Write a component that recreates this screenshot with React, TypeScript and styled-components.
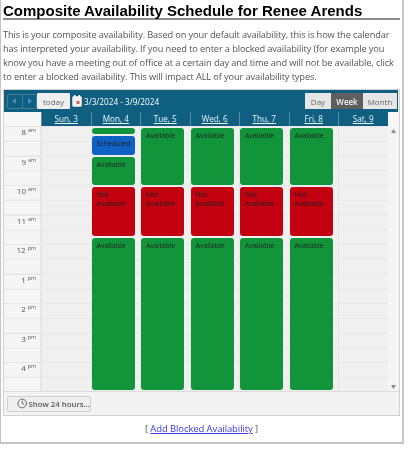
import { FC } from 'react';
import styled, { createGlobalStyle } from 'styled-components';
import { LuClock } from 'react-icons/lu';

const GlobalStyle = createGlobalStyle`
  html, body {
    margin: 0;
    padding: 0;
    background: #fff;
  }
`;

const Page = styled.div`
  width: 404px;
  height: 444px;
  box-sizing: border-box;
  padding: 3px 0 0 2px;
  background: #fff;
  border-left: 1px solid #c4c4c4;
  border-right: 2px solid #c8c8c8;
  border-bottom: 2px solid #c4c4c4;
  overflow: hidden;
  filter: blur(0.3px);
`;

const Title = styled.h1`
  margin: 0 0 8px;
  width: 397px;
  height: 15px;
  font: bold 15px/16px 'Liberation Sans', Arial, sans-serif;
  color: #000;
  white-space: nowrap;
  border-bottom: 2px solid #8c8c8c;
`;

const Intro = styled.p`
  margin: 0 0 5px;
  width: 394px;
  height: 56px;
  font: 9.25px/14px 'Open Sans', sans-serif;
  letter-spacing: -0.12px;
  color: #555;
`;

const Calendar = styled.div`
  width: 395px;
  border: 1px solid #d2d2d2;
  background: #f3f3f3;
`;

const Toolbar = styled.div`
  height: 22px;
  width: 394px;
  box-sizing: border-box;
  padding: 0 1px 0 3px;
  display: flex;
  align-items: center;
  background: #0e5f80;
  color: #fff;
  font: 9px 'Open Sans', sans-serif;
`;

const NavGroup = styled.div`
  display: flex;
  width: 30px;
  height: 15px;
  box-sizing: border-box;
  border: 1px solid #3f7d98;
  border-radius: 2px;
`;

const NavButton = styled.button<{ $first?: boolean }>`
  flex: 1;
  padding: 0;
  border: 0;
  border-left: ${(p) => (p.$first ? '0' : '1px solid #3f7d98')};
  background: transparent;
  display: flex;
  align-items: center;
  justify-content: center;
`;

const TodayButton = styled.button`
  width: 33px;
  height: 16px;
  padding: 0;
  border: 0;
  border-radius: 1px;
  background: #efefef;
  color: #666;
  font: 8px 'Open Sans', sans-serif;
`;

const DateRange = styled.span`
  margin-left: 2px;
  display: flex;
  align-items: center;
  gap: 2px;
  flex: 1;
  font-size: 8.2px;
  white-space: nowrap;
`;

const ViewGroup = styled.div`
  display: flex;
  height: 16px;
`;

const ViewButton = styled.button<{ $w: number; $active?: boolean }>`
  width: ${(p) => p.$w}px;
  padding: 0;
  border: 0;
  background: ${(p) => (p.$active ? '#5e5e5e' : '#e6e6e6')};
  color: ${(p) => (p.$active ? '#f4f4f4' : '#666')};
  font: ${(p) => (p.$active ? '600 ' : '')}8px 'Open Sans', sans-serif;
  white-space: nowrap;
`;

const HeaderRow = styled.div`
  display: grid;
  grid-template-columns: 37px repeat(7, 49.5px) 1fr;
  height: 14px;
  background: #f7f7f7;
`;

const HeaderCell = styled.div`
  background: #0e5f80;
  border-left: 1px solid #5b8ca3;
  color: #e8f3f8;
  font: 8.2px/14px 'Open Sans', sans-serif;
  text-align: center;
  text-decoration: underline;
  white-space: pre;
`;

const Corner = styled.div`
  background: #f7f7f7;
`;

const Body = styled.div`
  display: grid;
  grid-template-columns: 37px repeat(7, 49.5px) 1fr;
  height: 265px;
  overflow: hidden;
  border-bottom: 1px solid #dcdcdc;
`;

const TimeColumn = styled.div`
  display: flex;
  flex-direction: column;
  background: #f5f5f5;
  border-right: 1px solid #e8e8e8;
`;

const HourLabel = styled.div`
  flex: none;
  height: 29.5px;
  box-sizing: border-box;
  padding: 0 4px 0 0;
  text-align: right;
  font: 8px/12px 'Open Sans', sans-serif;
  color: #555;
  background: linear-gradient(#e6e6e6 1px, transparent 1px) 0 0 / 100% 14.75px;
  sup {
    font-size: 5.4px;
    line-height: 0;
    margin-left: 2px;
    vertical-align: 3px;
  }
`;

const DayColumn = styled.div`
  display: flex;
  flex-direction: column;
  gap: 2px;
  box-sizing: border-box;
  padding: 2px 0 0 0;
  background: linear-gradient(#e8e8e8 1px, transparent 1px) 0 0 / 100% 14.75px, #f0f0f0;
  border-left: 1px solid #e6e6e6;
`;

const EventBlock = styled.div<{ $kind: 'open' | 'busy' | 'booked'; $h: number }>`
  flex: none;
  height: ${(p) => p.$h}px;
  box-sizing: border-box;
  width: 43px;
  padding: 3px 0 0 5px;
  border-radius: 3px;
  background: ${(p) =>
    p.$kind === 'open' ? '#12953a' : p.$kind === 'busy' ? '#c3000f' : '#0f62c4'};
  color: #222;
  font: 7px/9.5px 'Open Sans', sans-serif;
  overflow: hidden;
`;

const ScrollTrack = styled.div`
  background: #f4f4f4;
  display: flex;
  flex-direction: column;
  justify-content: space-between;
  align-items: center;
  padding: 3px 0;
  color: #8a8a8a;
`;

const ScrollArrow = styled.svg`
  width: 5px;
  height: 4px;
  fill: #8a8a8a;
`;

const Footer = styled.div`
  height: 23px;
  display: flex;
  align-items: center;
  padding-left: 3px;
  background: #f3f3f3;
`;

const ShowButton = styled.button`
  width: 84px;
  height: 16px;
  box-sizing: border-box;
  padding: 0 0 0 9px;
  border: 1px solid #d0d0d0;
  border-radius: 2px;
  background: #efefef;
  color: #555;
  display: flex;
  align-items: center;
  gap: 1px;
  font: 600 7.8px 'Open Sans', sans-serif;
  white-space: nowrap;
`;

const LinkRow = styled.div`
  margin-top: 6px;
  text-align: center;
  font: 9.5px/14px 'Open Sans', sans-serif;
  letter-spacing: -0.1px;
  color: #555;
  width: 397px;
  a {
    color: #3a3ae0;
    text-decoration: underline;
  }
`;

const Triangle: FC<{ dir: 'left' | 'right' }> = ({ dir }) => (
  <svg width="7" height="8" viewBox="0 0 7 8">
    <path d={dir === 'left' ? 'M5 1 L1 4 L5 7 Z' : 'M2 1 L6 4 L2 7 Z'} fill="#4a86c8" />
  </svg>
);

const CalendarIcon: FC = () => (
  <svg width="10" height="12" viewBox="0 0 10 12">
    <rect x="0.5" y="1.5" width="9" height="10" rx="1" fill="#f2f2f2" stroke="#cfcfcf" />
    <rect x="2" y="0" width="1.5" height="3" fill="#fff" />
    <rect x="6.5" y="0" width="1.5" height="3" fill="#fff" />
    <rect x="4.5" y="6" width="3" height="3" fill="#c9685a" />
  </svg>
);

type DayEvent = { kind: 'open' | 'busy' | 'booked'; h: number; label?: string };

const standardDay: DayEvent[] = [
  { kind: 'open', h: 56.5, label: 'Available' },
  { kind: 'busy', h: 49.5, label: 'Not Available' },
  { kind: 'open', h: 152, label: 'Available' },
];

const mondayEvents: DayEvent[] = [
  { kind: 'open', h: 5.5 },
  { kind: 'booked', h: 19.5, label: 'Scheduled' },
  { kind: 'open', h: 27.5, label: 'Available' },
  { kind: 'busy', h: 49.5, label: 'Not Available' },
  { kind: 'open', h: 152, label: 'Available' },
];

const days: { name: string; events: DayEvent[] }[] = [
  { name: 'Sun, 3', events: [] },
  { name: 'Mon, 4', events: mondayEvents },
  { name: 'Tue, 5', events: standardDay },
  { name: 'Wed, 6', events: standardDay },
  { name: 'Thu, 7', events: standardDay },
  { name: 'Fri, 8', events: standardDay },
  { name: 'Sat, 9', events: [] },
];

const hours: [string, string][] = [
  ['8', 'am'],
  ['9', 'am'],
  ['10', 'am'],
  ['11', 'am'],
  ['12', 'pm'],
  ['1', 'pm'],
  ['2', 'pm'],
  ['3', 'pm'],
  ['4', 'pm'],
];

const App: FC = () => {
  return (
    <Page>
      <GlobalStyle />
      <Title>Composite Availability Schedule for Renee Arends</Title>
      <Intro>
        This is your composite availability. Based on your default availability, this is how the
        calendar has interpreted your availability. If you need to enter a blocked availability (for
        example you know you have a meeting out of office at a certain day and time and will not be
        available, click to enter a blocked availability. This will impact ALL of your availability
        types.
      </Intro>
      <Calendar>
        <Toolbar>
          <NavGroup>
            <NavButton $first>
              <Triangle dir="left" />
            </NavButton>
            <NavButton>
              <Triangle dir="right" />
            </NavButton>
          </NavGroup>
          <TodayButton>today</TodayButton>
          <DateRange>
            <CalendarIcon />
            3/3/2024 - 3/9/2024
          </DateRange>
          <ViewGroup>
            <ViewButton $w={26}>Day</ViewButton>
            <ViewButton $w={32} $active>
              Week
            </ViewButton>
            <ViewButton $w={34}>Month</ViewButton>
          </ViewGroup>
        </Toolbar>
        <HeaderRow>
          <Corner />
          {days.map((d) => (
            <HeaderCell key={d.name}>{d.name}</HeaderCell>
          ))}
          <Corner />
        </HeaderRow>
        <Body>
          <TimeColumn>
            {hours.map(([h, m]) => (
              <HourLabel key={h}>
                {h}
                <sup>{m}</sup>
              </HourLabel>
            ))}
          </TimeColumn>
          {days.map((d) => (
            <DayColumn key={d.name}>
              {d.events.map((e, i) => (
                <EventBlock key={i} $kind={e.kind} $h={e.h}>
                  {e.label}
                </EventBlock>
              ))}
            </DayColumn>
          ))}
          <ScrollTrack>
            <ScrollArrow viewBox="0 0 5 4">
              <path d="M2.5 0 L5 4 L0 4 Z" />
            </ScrollArrow>
            <ScrollArrow viewBox="0 0 5 4">
              <path d="M0 0 L5 0 L2.5 4 Z" />
            </ScrollArrow>
          </ScrollTrack>
        </Body>
        <Footer>
          <ShowButton>
            <LuClock size={11} />
            Show 24 hours...
          </ShowButton>
        </Footer>
      </Calendar>
      <LinkRow>
        [ <a href="#add">Add Blocked Availability</a> ]
      </LinkRow>
    </Page>
  );
};

export default App;
